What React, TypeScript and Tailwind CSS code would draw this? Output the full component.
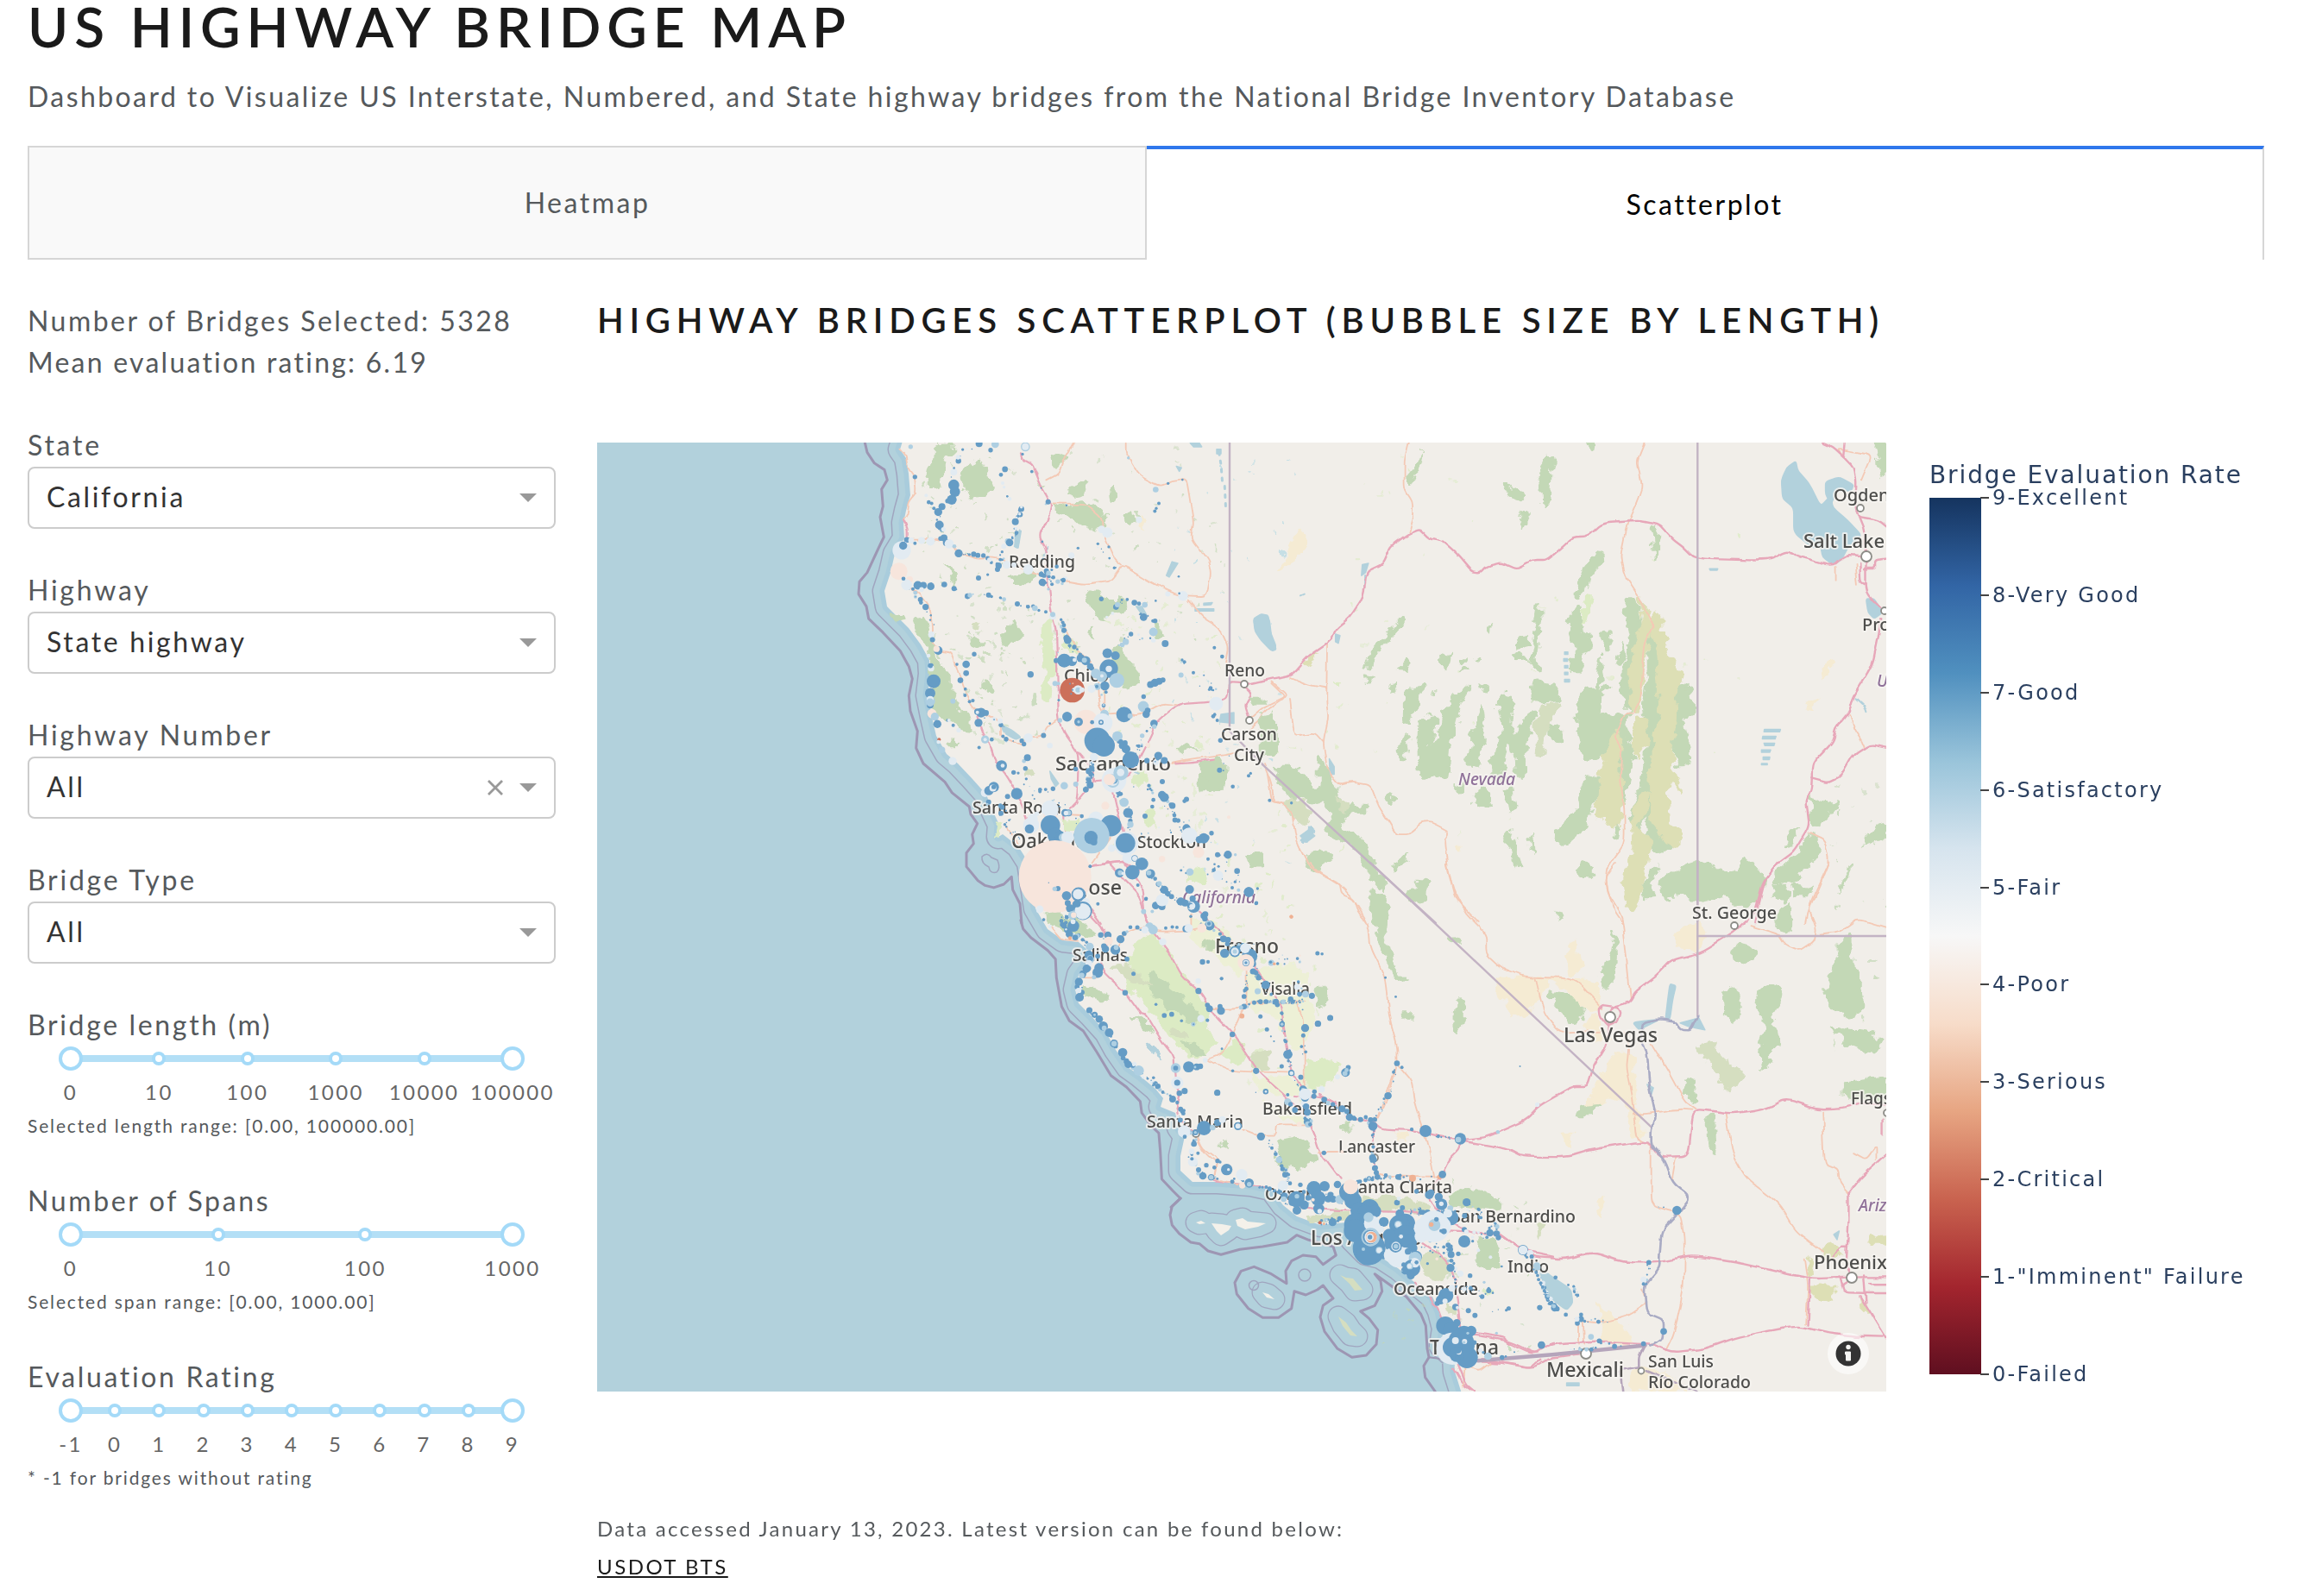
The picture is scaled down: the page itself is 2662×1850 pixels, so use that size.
import React, { createContext, useContext } from "react";

type Sheet = { ox: number; oy: number; sx: number; sy: number };

const NORTH: Sheet = { ox: 1000, oy: 510, sx: 3, sy: 2.8 };
const CENTRAL: Sheet = { ox: 1000, oy: 900, sx: 2.8, sy: 3 };
const SOUTH: Sheet = { ox: 1300, oy: 1240, sx: 3, sy: 3 };
const NEVADA: Sheet = { ox: 1440, oy: 510, sx: 2.09, sy: 2.8 };
const DESERT: Sheet = { ox: 1440, oy: 1000, sx: 2.09, sy: 2.529 };

const COLORS: Record<string, string> = {
  b: "#659cc5",
  l: "#aecfe2",
  w: "#e2ebf2",
  p: "#f7e5dc",
  r: "#cc705a",
  o: "#efb193",
};

const GREEN = "#c3d8b6";
const LIME = "#dcebc4";
const OLIVE = "#dddfb5";
const SAGE = "#d5dec0";
const SAND = "#f5ebd3";
const LAND = "#f1eee9";
const WATER = "#b2d1dc";
const PINK = "#e7a7b9";
const PEACH = "#f4c9b5";
const BORDER = "#c3b3c4";

const SheetContext = createContext<Sheet>(NORTH);

function Layer({ sheet, children }: { sheet: Sheet; children: React.ReactNode }) {
  return <SheetContext.Provider value={sheet}>{children}</SheetContext.Provider>;
}

type Point = [number, number];

function project(sheet: Sheet, points: string): Point[] {
  return points
    .trim()
    .split(/\s+/)
    .map((p) => {
      const [u, v] = p.split(",").map(Number);
      return [sheet.ox + u / sheet.sx, sheet.oy + v / sheet.sy];
    });
}

const mid = (a: Point, b: Point): Point => [(a[0] + b[0]) / 2, (a[1] + b[1]) / 2];
const fmt = (p: Point) => `${p[0].toFixed(1)} ${p[1].toFixed(1)}`;

/* Rounded outline that passes through the middle of every edge. */
function closedPath(pts: Point[]) {
  if (pts.length < 5) return `M${pts.map(fmt).join("L")}Z`;
  const n = pts.length;
  let d = `M${fmt(mid(pts[n - 1], pts[0]))}`;
  pts.forEach((p, i) => {
    const next = pts[(i + 1) % n];
    const prev = pts[(i + n - 1) % n];
    const a = mid(mid(prev, p), p);
    const b = mid(p, mid(p, next));
    d += `L${fmt(a)}Q${fmt(p)} ${fmt(b)}`;
  });
  return `${d}Z`;
}

function openPath(pts: Point[]) {
  if (pts.length < 3) return `M${pts.map(fmt).join("L")}`;
  let d = `M${fmt(pts[0])}`;
  for (let i = 1; i < pts.length - 1; i++) {
    const a = mid(mid(pts[i - 1], pts[i]), pts[i]);
    const b = mid(pts[i], mid(pts[i], pts[i + 1]));
    d += `L${fmt(a)}Q${fmt(pts[i])} ${fmt(b)}`;
  }
  return `${d}L${fmt(pts[pts.length - 1])}`;
}

function Areas({ fill, list, crisp }: { fill: string; list: string[]; crisp?: boolean }) {
  const sheet = useContext(SheetContext);
  return (
    <g fill={fill} stroke={fill} strokeWidth={1.5} strokeLinejoin="round" filter={crisp ? undefined : "url(#ragged)"}>
      {list.map((p, i) => (
        <path key={i} d={closedPath(project(sheet, p))} />
      ))}
    </g>
  );
}

function Lines({ stroke, width, list, straight }: { stroke: string; width: number; list: string[]; straight?: boolean }) {
  const sheet = useContext(SheetContext);
  return (
    <g fill="none" stroke={stroke} strokeWidth={width} strokeLinejoin="round" strokeLinecap="round" filter={straight ? undefined : "url(#winding)"}>
      {list.map((p, i) => (
        <path key={i} d={straight ? `M${project(sheet, p).map(fmt).join("L")}` : openPath(project(sheet, p))} />
      ))}
    </g>
  );
}

function makeRandom(seed: number) {
  let a = seed;
  return () => {
    a = (a + 0x6d2b79f5) | 0;
    let t = Math.imul(a ^ (a >>> 15), 1 | a);
    t = (t + Math.imul(t ^ (t >>> 7), 61 | t)) ^ t;
    return ((t ^ (t >>> 14)) >>> 0) / 4294967296;
  };
}

function Bubbles({ sheet, data }: { sheet: Sheet; data: string }) {
  return (
    <>
      {data
        .trim()
        .split(/\s+/)
        .map((s, i) => {
          const [u, v, r, c] = s.split(",");
          return <circle key={i} cx={sheet.ox + +u / sheet.sx} cy={sheet.oy + +v / sheet.sy} r={+r / sheet.sx} fill={COLORS[c]} />;
        })}
    </>
  );
}

/* Small bridges strung along a highway. */
function Route({ sheet, points, count, spread = 4, max = 3, seed }: { sheet: Sheet; points: string; count: number; spread?: number; max?: number; seed: number }) {
  const pts = project(sheet, points);
  const rnd = makeRandom(seed);
  const lens = pts.slice(1).map((p, i) => Math.hypot(p[0] - pts[i][0], p[1] - pts[i][1]));
  const total = lens.reduce((a, b) => a + b, 0);
  const out: React.ReactNode[] = [];
  for (let k = 0; k < count; k++) {
    let d = rnd() * total;
    let i = 0;
    while (i < lens.length - 1 && d > lens[i]) d -= lens[i++];
    const t = d / lens[i];
    const x = pts[i][0] + (pts[i + 1][0] - pts[i][0]) * t + (rnd() - 0.5) * spread;
    const y = pts[i][1] + (pts[i + 1][1] - pts[i][1]) * t + (rnd() - 0.5) * spread;
    const r = 0.7 + Math.pow(rnd(), 2.4) * max;
    const q = rnd();
    out.push(<circle key={k} cx={x} cy={y} r={r} fill={q < 0.72 ? COLORS.b : q < 0.86 ? COLORS.l : q < 0.97 ? COLORS.w : COLORS.p} />);
  }
  return <>{out}</>;
}

const COAST =
  "1048,505 1043,521 1050,531 1053,549 1055,574 1050,592 1047,606 1048,624 1037,642 1032,664 1025,685 1028,703 1040,715 1053,728 1067,747 1077,765 1078,781 1075,806 1080,831 1085,853 1097,874 1110,885 1127,903 1143,921 1150,939 1158,956 1157,970 1162,967 1180,981 1192,1000 1200,1053 1214,1077 1232,1090 1250,1092 1259,1100 1262,1113 1250,1130 1246,1147 1250,1163 1264,1177 1282,1197 1293,1217 1307,1237 1321,1247 1339,1262 1348,1273 1345,1283 1362,1290 1366,1307 1373,1317 1368,1340 1368,1357 1382,1370 1411,1370 1450,1373 1473,1378 1487,1397 1503,1410 1530,1420 1560,1417 1567,1437 1583,1453 1600,1457 1620,1470 1640,1487 1660,1503 1668,1520 1673,1540 1670,1560 1685,1573 1686,1590 1697,1625";

const ISLANDS = [
  "1386,1417 1392,1415 1397,1418 1390,1419",
  "1404,1418 1416,1419 1427,1421 1424,1426 1415,1432 1410,1427",
  "1432,1414 1440,1412 1446,1416 1467,1418 1458,1422 1443,1425 1434,1421",
  "1463,1498 1470,1500 1477,1506 1468,1504",
];
const GREEN_ISLANDS = ["1553,1478 1560,1481 1568,1482 1579,1495 1570,1496 1564,1488", "1551,1526 1560,1533 1566,1542 1573,1549 1565,1548 1556,1537"];

const SMALL_TOWNS = [
  [1442, 793, 4], [1448, 835, 4], [1866, 1179, 6], [2010, 1073, 4], [2146, 1481, 6], [1838, 1569, 6],
  [1902, 1589, 3.5], [2163, 645, 6], [2156, 589, 4], [1386, 1314, 4], [1593, 1342, 4], [2187, 1290, 4], [2184, 708, 4],
];

type Label = [string, number, number, number, number, boolean?];
/* text, x, baseline, font size, width (0 keeps the natural width), region name */
const LABELS: Label[] = [
  ["Redding", 1169, 658, 20, 77],
  ["Chico", 1233, 790, 20, 52],
  ["Reno", 1419, 784, 20, 47],
  ["Carson", 1415, 858, 20, 65],
  ["City", 1430, 882, 20, 35],
  ["Sacramento", 1223, 893, 22, 134],
  ["Santa Rosa", 1127, 943, 20, 103],
  ["Oakland", 1172, 983, 23, 88],
  ["Stockton", 1318, 983, 19, 80],
  ["San Jose", 1208, 1037, 23, 92],
  ["California", 1370, 1047, 19, 85, true],
  ["Salinas", 1243, 1114, 19, 64],
  ["Fresno", 1408, 1105, 23, 74],
  ["Visalia", 1461, 1153, 19, 57],
  ["Santa Maria", 1329, 1307, 19, 112],
  ["Bakersfield", 1463, 1292, 19, 104],
  ["Lancaster", 1551, 1336, 19, 89],
  ["Oxnard", 1466, 1391, 19, 66],
  ["Santa Clarita", 1563, 1383, 19, 120],
  ["Los Angeles", 1519, 1443, 23, 128],
  ["San Bernardino", 1682, 1417, 19, 144],
  ["Indio", 1747, 1475, 19, 48],
  ["Oceanside", 1615, 1501, 19, 98],
  ["Tijuana", 1657, 1570, 23, 80],
  ["Mexicali", 1792, 1596, 23, 90],
  ["San Luis", 1910, 1585, 19, 76],
  ["Río Colorado", 1910, 1609, 19, 119],
  ["Las Vegas", 1812, 1208, 23, 109],
  ["St. George", 1961, 1065, 19, 98],
  ["Salt Lake City", 2090, 635, 22, 0],
  ["Ogden", 2125, 581, 20, 0],
  ["Provo", 2158, 731, 20, 0],
  ["Utah", 2175, 796, 19, 0, true],
  ["Nevada", 1690, 910, 19, 66, true],
  ["Flagstaff", 2145, 1280, 19, 0],
  ["Arizona", 2154, 1404, 19, 0, true],
  ["Phoenix", 2102, 1471, 22, 0],
];

const TERRITORIAL_NORTH =
  "7,8 15,40 40,75 75,97 85,130 65,160 70,215 60,250 73,315 55,350 15,430 -12,460 -15,500 12,540 20,580 70,625 130,685 160,735 172,775 160,830 165,880 190,945 185,1000 210,1050 285,1110 310,1145 370,1190 375,1215 398,1245 380,1280 385,1310 360,1340 360,1385 400,1430 425,1446 455,1453 490,1442 517,1418 521,1460 546,1505 552,1568";
const TERRITORIAL_CENTRAL =
  "512,500 520,530 545,560 600,605 625,635 628,700 645,800 670,850 715,885 760,960 805,1040 855,1080 900,1130 905,1170 935,1215 960,1240 965,1300 968,1360 970,1400 1005,1440 1030,1467 1000,1498";
const TERRITORIAL_SOUTH =
  "205,447 175,475 168,505 175,540 200,570 240,600 270,605 300,630 345,643 410,625 490,615 575,600 608,575 650,592 735,615 745,645 700,677 675,650 630,645 590,665 570,700 573,743 520,710 460,685 415,700 393,740 400,780 440,830 490,862 545,862 590,830 600,770 640,783 680,765 700,750 735,795 700,820 690,860 705,910 750,970 800,1000 850,993 885,955 890,905 860,865 830,840 880,820 905,770 900,735 880,710 990,790 1040,850 1057,890 1062,970 1068,1000 1050,1030 1055,1070 1090,1119";

const NORTH_BUBBLES = `
404,12,12,b 444,33,8,b 460,14,13,l 565,22,16,l 565,22,12,w 347,31,5,b 555,46,5,b 166,22,8,l 331,56,8,w 494,95,10,b 480,113,7,b
181,120,8,b 316,104,12,w 317,91,4,b 316,146,19,b 320,168,18,b 309,194,17,b 275,216,12,b 262,234,14,b 229,202,7,b 239,206,6,b 247,222,6,b
266,276,15,b 280,290,8,w 282,318,12,b 270,320,8,b 290,333,12,b 300,337,16,w 318,345,7,l 333,368,14,b 370,372,5,b 419,375,8,b 440,389,8,w
472,408,11,b 468,420,9,b 500,405,14,w 575,420,18,w 525,405,9,w 153,324,10,b 168,326,10,w 181,335,6,b 204,326,12,w 235,329,15,w
135,358,32,w 140,343,14,b 125,426,30,p 163,453,11,p 152,470,19,w 141,450,7,b 191,472,15,b 210,472,12,b 236,475,13,b 174,484,6,b 204,485,8,w
283,469,10,b 317,482,9,b 200,518,9,b 202,528,7,b 218,542,11,b 364,507,10,b 372,504,8,l 402,448,9,b 434,437,5,b 437,503,9,b 478,512,5,b 491,517,7,l
537,532,9,b 574,541,7,b 592,540,7,b 598,546,10,l 636,558,6,b 660,572,12,w 660,566,9,l 689,583,5,b 695,592,6,b 699,601,7,b 699,618,9,b 708,643,11,b 712,650,13,b 735,672,8,b
530,265,12,b 534,301,7,b 510,333,13,b 551,224,10,b 547,242,9,b 551,218,5,w 545,240,5,w 490,345,9,w 484,363,5,b 644,201,9,b 708,212,4,b
486,140,6,w 491,153,5,w 502,183,4,b 510,191,7,w 220,180,6,w
624,462,13,b 620,436,9,b 638,425,9,b 630,440,8,b 662,446,7,b 645,432,8,l 697,455,8,b 674,411,7,b 645,484,5,l 725,375,11,w
748,351,5,b 817,337,5,b 850,300,18,w 830,290,13,w 855,347,5,b 874,415,5,b 923,58,5,l 1018,161,10,l 1061,141,5,b 1111,129,4,b 1029,206,6,b 1020,222,5,b 1015,231,6,b 960,259,11,w
1113,506,17,w 1060,500,9,w 1100,498,4,b 1098,443,4,b 1018,522,4,b 980,535,10,l 944,528,10,b 960,531,7,b 976,575,13,b 1016,587,8,b 880,542,10,b 885,535,9,l 829,516,8,b 848,575,5,w 868,563,6,w
932,630,8,b 914,655,11,l 902,665,8,l 1010,623,15,l 1010,650,8,w 1051,661,12,b 1222,674,6,b 1249,703,7,b 1106,763,9,l 1149,755,6,b 1118,720,6,b 1110,714,5,b 1209,805,7,b
238,632,11,w 242,648,9,b 262,683,15,b 256,678,11,p 236,734,10,b 237,741,11,w 235,733,8,b 246,783,24,b 234,822,18,b 234,848,17,l 234,842,12,w 234,860,12,b 234,852,14,l 228,700,7,w
240,888,16,p 250,898,14,l 259,922,14,b 265,972,6,r 263,980,7,w 275,1006,11,l 312,1042,14,w 294,910,5,b 299,910,6,w 314,926,6,b 333,942,8,w 313,848,9,l 355,829,6,b 339,780,10,b 359,757,10,b 359,728,13,b 387,695,8,b
398,882,11,b 411,885,17,b 398,884,6,w 428,886,10,b 402,918,14,b 425,972,14,l 425,972,6,w 448,972,7,b 404,998,6,b 480,925,8,b 477,912,9,w 487,962,6,b 498,971,8,b 560,987,8,b 575,967,16,w 628,959,9,b 630,945,5,w 650,992,10,w 650,920,4,b 685,910,8,l 583,761,11,b
482,1057,19,b 486,1057,7,w 524,1079,8,b 540,1081,5,b 565,1066,8,b 560,1042,7,l 572,1031,12,b 568,1100,5,b 560,1118,3,b
425,1145,15,w 438,1138,16,b 455,1126,18,b 452,1130,12,w 455,1126,8,b 437,1175,9,b 432,1183,5,l 535,1148,20,b 503,1157,9,b 478,1186,7,b 484,1192,9,b 480,1212,9,b 661,1132,8,b 700,1122,13,l 740,1117,9,l 616,1135,7,b 740,1068,8,b
850,692,17,b 878,700,15,b 700,716,24,b 672,716,9,b 727,718,17,b 736,714,7,w 757,708,14,b 775,716,16,b 770,715,9,l 790,735,11,b 796,741,8,b
855,742,32,b 855,743,11,w 810,758,17,l 830,768,19,l 831,766,6,w 883,780,26,l 841,798,16,b 815,800,12,l 795,808,14,w 813,800,6,b 668,790,9,l 680,790,6,l
728,812,43,r 735,811,8,w 748,811,16,w 748,811,9,l 762,811,9,w 729,811,3,b 724,824,3,b 730,790,3,o 720,791,3,b 837,862,7,b 837,860,4,l
776,915,42,p 710,898,17,b 750,915,15,b 750,915,5,l 835,918,33,w 840,890,15,l 832,916,31,w 797,916,7,b 828,916,9,b 828,916,4,w 908,891,27,b 929,896,9,l 975,865,19,l 985,890,13,b 976,833,8,b 990,878,10,b 1012,920,13,b 1013,930,8,l
1000,794,12,b 1015,788,14,b 1030,783,12,b 1043,779,9,b 1228,856,24,w 1218,897,7,b 1232,910,6,b 1243,975,8,b
815,976,45,b 838,992,38,b 885,962,18,l 897,980,9,b 902,992,12,b 915,1003,15,b 931,1038,29,b 803,1029,14,w 796,1065,9,b 792,1085,8,b 790,1120,12,b 775,1135,10,b 945,1048,12,b
1027,1025,14,b 1048,1040,12,b 971,960,8,l 990,990,8,p 1240,1072,9,b 1286,1125,7,b 1341,1090,6,b 1348,1082,5,b 1414,1170,6,b 1041,1109,9,b 1490,1178,5,b
873,1104,43,w 870,1100,28,w 869,1108,22,l 869,1106,18,w 872,1103,14,b 866,1100,17,l 857,1102,20,p 897,1080,26,l 896,1079,13,w
891,1149,8,b 908,1176,16,l 922,1210,17,b 930,1248,11,l 843,1187,14,p 981,1221,9,b 1010,1168,7,b 1006,1190,7,b 1040,1152,14,b 1048,1160,16,b 1076,1187,11,b 1125,1166,9,b 1118,1172,7,b 1083,1218,7,b 1096,1235,8,b
1125,1260,14,b 1135,1284,28,w 1185,1293,18,b 1170,1297,13,b 1195,1291,10,b 1212,1276,8,b 1167,1338,20,p 1233,1346,9,b 1269,1346,14,b 1295,1346,5,l 1200,1360,6,b 1220,1396,7,b 1301,1399,10,b 1235,1414,18,w 1137,1402,13,l 1040,1360,11,p
650,1198,30,w 652,1215,25,p 652,1200,28,w 652,1250,34,b 585,1250,28,w 579,1262,16,b 590,1230,18,w 668,1283,26,b 685,1285,18,b 695,1290,14,l 712,1290,22,w 742,1282,9,b 715,1210,12,b 703,1210,13,b 715,1210,9,l 706,1211,8,w 761,1221,7,b
605,1213,8,w 810,1230,26,w 862,1252,37,b 795,1284,62,l 793,1290,23,b 803,1305,12,b 915,1310,42,w 913,1308,34,b 865,1325,13,w 920,1357,18,w 945,1358,11,b 945,1358,9,w 970,1376,22,b 937,1403,25,b 892,1405,16,b 895,1405,9,l 905,1407,6,w
668,1417,126,p 790,1384,6,b 615,1523,13,w 1000,1408,16,b 994,1405,9,l 1016,1424,7,b 1030,1440,9,l 1048,1460,14,b 1060,1473,10,b 1073,1482,9,b 1040,1496,22,w 1018,1511,13,b 1040,1515,12,b 1040,1494,21,w
678,1456,9,b 667,1457,8,l 708,1479,16,b 712,1503,10,b 750,1475,25,b 748,1474,18,w 775,1500,14,w 743,1508,15,b 765,1528,32,b 764,1530,28,w 720,1520,14,b 745,1506,12,b 646,1437,2,b
1105,1498,14,b 1120,1503,12,b 1150,1514,22,b 1142,1512,14,w 1137,1511,10,b 1143,1514,8,w 1136,1459,15,b 1342,1467,17,b 1367,1504,6,b 1372,1456,5,b 984,1490,6,b 976,1530,8,l 1006,1530,6,l 817,1506,6,b 956,1445,6,b 1294,1434,5,b 1306,1461,6,l 1284,1453,6,b
1491,1548,5,o 1272,1224,6,p 628,1557,5,b 690,1561,7,b`;

const CENTRAL_BUBBLES = `
572,466,9,w 587,498,5,b 607,522,6,w 644,503,6,b 653,520,9,b 683,520,19,b 682,505,8,w 670,548,12,b 672,562,6,o 689,560,9,b 713,568,6,b 726,577,5,b 680,483,14,l 665,440,9,b 684,482,9,p
736,592,13,l 733,620,14,b 738,636,13,l 738,634,9,b 762,625,8,b 733,650,11,w 726,668,13,b 714,686,11,b 710,692,9,l 701,714,13,b 695,732,8,b 700,745,9,w 703,768,14,b 766,665,15,b 762,682,17,b 750,698,7,l 725,672,8,b
772,551,9,b 795,552,12,b 797,572,14,p 782,590,9,b 787,600,12,b 819,603,16,b 822,595,8,l 836,566,13,b 848,546,8,b 857,540,5,l 857,635,8,b 878,686,7,b 851,752,9,b
735,813,10,b 752,829,10,b 752,829,4,l 767,844,12,b 780,868,15,b 783,875,8,l 799,891,14,b 815,929,13,b 815,929,9,l 843,960,15,b 855,990,9,b 861,1001,12,b 895,1023,17,l 924,1051,4,b 943,1048,5,b 957,1078,9,b 964,1090,6,l 942,1074,4,b
1005,1122,11,b 1027,1102,9,b 1044,1094,10,b 1020,1065,20,w 1020,1065,10,b 1020,1134,6,b 1031,1157,8,b 1030,1195,8,b 1015,1014,16,l 1015,1014,8,b 1057,1010,18,b 1083,1010,11,b 1095,1008,9,b 1078,1011,4,l 1111,987,8,w
1150,1100,10,b 951,793,5,b 978,831,8,b 1002,827,8,b 1034,850,5,b 1072,862,7,l 1073,862,3,b 1097,842,12,w 1118,848,6,b 1165,947,4,b 1118,795,8,b 1125,808,11,b 1162,815,13,b 1159,800,8,b 1089,746,10,b 1164,703,6,b 1088,712,9,w
1199,897,9,b 1200,1024,5,b 1276,1024,10,b 1230,833,8,o 1290,835,7,b 1311,880,7,b 1324,904,3,b 1334,921,3,b 1359,823,6,b 1360,862,9,b 1360,862,5,l 1372,922,6,b 1379,967,15,b 1359,1008,7,b 1390,1031,10,b 1390,1031,7,w 1421,1046,8,b
1435,875,13,b 1429,901,7,b 1477,860,10,b 1517,840,9,b 1457,763,10,b 1436,757,11,l 1417,757,8,b 1388,775,9,b 1340,784,10,b 1364,784,8,l 1308,783,8,b 1290,783,8,b 1270,787,7,b 1237,800,9,b 1227,803,7,l 1237,765,8,b 1413,714,5,b 1409,732,10,w
1307,725,14,b 1281,747,10,l 1284,700,9,b 1266,678,10,b 1243,598,17,w 1255,625,25,b 1240,598,16,w 1243,647,27,p 1243,648,11,b 1243,648,9,w 1243,648,5,b 1207,609,18,b 1207,609,13,w 1207,609,7,l 1174,615,15,b 1183,582,8,b 1170,565,11,b 1159,548,6,b
1125,518,16,b 1123,512,10,l 1123,512,6,b 1100,527,15,p 1057,528,14,w 1048,530,11,b 1055,528,12,w 930,523,14,l 942,533,15,l 915,533,12,w 973,575,12,w 911,470,8,l 919,425,6,b 1070,425,10,b 1110,495,9,b 1064,487,5,b
1102,645,9,b 1120,645,6,b 1325,648,10,l 1323,646,5,b 1335,652,5,o 1346,651,5,b 1390,488,6,o 1475,615,7,b 1490,617,5,b 1277,440,6,b 1307,1096,9,b 1307,1096,4,w 1275,1099,2,b`;

const SOUTH_BUBBLES = `
590,12,10,b 590,12,7,w 622,25,8,b 467,4,9,b 778,10,15,b 777,12,8,l 750,25,9,w 695,68,11,w 630,68,13,b 637,88,22,w 630,70,7,l 637,97,14,b 637,85,20,w 670,76,8,b 668,92,9,b 704,104,10,b 717,116,8,l 733,119,6,b 577,112,12,l 587,120,8,b 602,140,10,b 641,128,11,b 645,148,12,b 766,136,12,b 577,87,6,b
501,76,8,b 501,76,4,w 792,165,13,b 807,169,8,b 830,173,9,b 865,174,9,b 880,173,8,b 873,196,16,b 925,91,12,b 1008,207,6,b 1056,213,21,b 1177,240,20,b 1170,243,10,l 1307,216,6,l 1445,121,8,w 648,190,11,l 655,190,7,b 617,190,9,p
332,80,10,b 286,203,25,b 316,201,10,l 333,184,12,b 350,173,12,w 404,196,14,b 404,196,9,w 484,232,14,b 217,215,22,w 219,233,7,b 256,218,10,b 256,218,5,l 251,258,10,b 243,284,10,w 265,290,6,b 247,320,17,w 244,310,6,b 267,348,9,b 282,369,13,b 294,332,8,b 311,374,11,b 311,374,8,l 322,340,7,b 333,317,8,b 342,321,5,b 365,347,20,b 371,347,5,w 417,365,20,w 419,402,11,p 443,394,16,b 443,398,8,l 514,414,8,b
703,289,8,b 766,285,6,p 522,272,6,b 535,293,7,b 547,313,11,l 559,345,8,b 568,365,10,b 560,403,18,w 585,395,7,b 621,400,8,b 565,440,13,b 563,450,10,l 633,425,7,b
668,412,25,b 705,405,18,b 683,447,26,b 607,450,28,b 609,440,8,l 609,489,15,b 634,470,16,b 685,483,19,b 688,492,8,w 665,452,6,p 750,399,13,b 718,449,12,b 735,450,12,b 758,451,16,l 790,425,34,b 804,455,30,b 825,490,30,b 796,407,26,p
862,482,32,b 880,492,22,b 845,495,25,b 815,540,42,b 812,560,40,b 870,535,28,w 858,513,17,l 860,622,57,b 855,640,40,b 911,529,17,b 900,555,12,w 733,530,14,b 757,517,8,b 689,532,6,r 703,536,4,o
865,582,32,l 863,582,25,b 866,582,22,w 868,582,19,o 863,582,13,w 863,582,8,b 895,628,12,l 895,628,9,w 840,624,6,l 910,645,14,b
967,500,15,b 985,535,35,b 965,540,35,b 961,538,13,l 961,538,9,w 955,600,42,b 985,580,40,b 930,575,22,b 971,580,7,w 1000,600,26,b 1010,620,18,b
960,650,38,w 935,645,24,w 985,640,22,w 952,614,22,b 953,614,16,w 953,614,12,b 953,614,8,l 1000,655,20,w 995,632,11,b 1023,650,21,b 1015,660,18,w 1020,655,22,l 1018,672,18,w 1008,690,30,b 1020,672,16,w 1025,670,7,b 1005,715,14,b 1002,683,11,l 1000,683,8,w 980,678,8,b 965,672,8,w
872,306,12,b 877,313,10,b 880,342,10,b 885,358,9,b 889,373,10,b 918,367,7,b 932,373,6,l 961,373,10,b 1011,377,12,o 1104,373,8,o 1115,364,13,b 829,388,6,b 860,378,8,b 860,378,5,l 1069,435,15,b 1075,428,12,b 1025,423,8,b 1102,442,14,b 1112,468,20,b 1111,466,8,w 957,462,10,b 963,448,7,w 1047,496,9,b 1062,496,9,b
1145,515,26,b 1142,482,10,l 1130,500,12,w 1085,545,55,w 1050,550,34,w 1040,580,22,w 1110,545,35,w 1087,540,21,l 1076,538,8,o 1094,520,8,b 1120,562,10,b 1110,560,6,b 1135,500,14,w 1155,520,14,b 1066,578,14,w
1199,461,14,b 1240,485,6,b 1192,508,9,b 1222,483,4,p 1191,597,21,b 1191,556,9,b 1198,563,8,w 1170,640,8,b 1145,643,12,b 1143,625,9,b 1135,610,9,b 1143,689,14,b 1146,664,7,b 1177,709,11,w 1211,716,8,b 1063,674,5,b 1225,565,6,w 1240,565,5,w 1280,567,13,b 1303,570,11,b 1309,585,8,b 1305,545,8,l 1220,596,5,b
1395,627,18,b 1395,627,16,w 1420,637,11,w 1426,650,7,b 1443,682,12,l 1441,705,6,b 1321,684,4,b 1282,652,6,w 1240,628,6,w
1127,785,26,b 1108,800,16,b 1097,812,9,b 1124,805,9,w 1148,760,12,w 1160,825,11,b 1167,827,6,w 1205,838,9,b 1228,854,9,b 1191,762,8,w 1276,768,9,b 1253,789,8,b 1290,776,4,b 1213,760,7,b 1346,830,7,b 1337,836,5,b 1453,827,9,b 1309,834,2,b 1260,739,5,l 1289,841,2,b
1125,890,32,b 1165,880,13,b 1145,905,28,b 1215,908,18,b 1190,920,30,b 1180,950,45,b 1150,970,56,w 1175,940,38,b 1200,1000,38,b 1197,960,30,b 1150,965,34,b 1165,990,26,b 1160,942,12,w 1172,982,9,w 1168,975,12,b 1192,945,9,w 1190,948,5,l 1168,1004,9,b 1203,916,5,l
1246,976,8,w 1273,996,13,l 1257,983,5,b 1322,1000,8,b 1335,997,4,b 1303,916,5,l 1365,982,3,b 1459,957,12,b`;

const DESERT_BUBBLES = `
374,588,7,b 386,600,4,b 353,683,8,b 371,393,3,b 346,337,3,b 672,597,2,b 15,86,12,b 33,119,4,b 118,158,4,o 251,612,8,b 256,600,6,b 248,618,6,l 252,608,5,l 182,472,7,b 212,455,7,b
410,782,4,b 619,790,4,l 714,710,5,w 1052,1019,11,b 984,1172,6,b 971,1222,7,w 971,1235,4,b 1020,1374,8,b 971,1410,6,b 901,1418,6,b 864,1402,6,b 844,1390,7,l 845,1427,5,b 833,1427,5,l 817,1427,4,l 724,1414,9,b 629,1451,5,b 595,1447,8,l
820,1338,7,b 820,1325,5,b 811,1350,6,b 810,1338,6,w 862,1346,5,b 783,1325,5,b 756,1305,9,b 762,1308,6,b 738,1272,6,b 740,1270,4,l 720,1304,6,b 758,1216,5,b 754,1300,5,l 731,1255,4,b 644,1307,5,b 727,1244,4,b 722,1232,4,b 717,1222,4,b
714,1186,8,l 789,1238,3,b 804,1250,4,l 812,1268,3,b 803,1256,3,b 700,1155,5,b 1020,1010,2,b 1008,1010,2,l`;

const ROUTES: [Sheet, string, number, number, number][] = [
  [NORTH, "404,12 347,31 331,56 316,104 316,146 309,194 262,234 266,276 282,318 333,368 419,375 472,408", 26, 6, 2.5],
  [NORTH, "191,472 283,469 317,482 372,504 437,503 537,532 598,546 660,566", 16, 5, 2],
  [NORTH, "551,224 530,265 534,301 510,333 472,400", 18, 5, 3],
  [NORTH, "152,470 200,518 240,580 238,640 262,683 300,690 340,780 355,829 398,882 480,925 498,971 560,987", 30, 6, 2],
  [NORTH, "565,60 644,201 620,300 650,480 672,620 678,780 685,910", 12, 6, 1.3],
  [NORTH, "624,462 697,455 620,436 660,420", 22, 8, 2.2],
  [NORTH, "689,583 712,650 757,708 796,741 837,800 837,862", 22, 6, 2.4],
  [NORTH, "829,516 944,528 976,575 1016,587", 12, 6, 2],
  [NORTH, "1015,650 932,630 900,665 878,700", 8, 6, 1.6],
  [NORTH, "817,337 874,415", 5, 4, 1],
  [NORTH, "1098,690 1118,720 1149,755 1209,805 1218,897 1243,975 1286,1125", 16, 14, 1.2],
  [NORTH, "797,1040 792,1085 775,1135", 22, 5, 3],
  [NORTH, "885,962 902,992 931,1038 1048,1040", 24, 8, 3],
  [NORTH, "873,1104 891,1149 922,1210 930,1248 915,1310", 20, 6, 2.6],
  [NORTH, "931,1038 1012,920 985,890 975,865", 14, 6, 2],
  [NORTH, "940,1120 1000,1130 1048,1160 1096,1235 1170,1297", 26, 8, 2.4],
  [NORTH, "1170,1297 1269,1346 1233,1380 1301,1399 1284,1453 1342,1467", 18, 24, 1.2],
  [NORTH, "930,1300 1010,1270 1090,1260 1125,1260", 14, 10, 1.2],
  [NORTH, "970,1376 1030,1440 1073,1482 1150,1514 1230,1568", 34, 7, 3],
  [NORTH, "484,1192 520,1280 545,1310", 14, 10, 1.4],
  [NORTH, "560,1118 650,1160 700,1210 761,1221", 20, 20, 1.4],
  [NORTH, "1090,1420 1137,1402 1170,1380 1220,1396", 8, 30, 1.2],
  [NORTH, "708,1479 765,1528 720,1540 690,1561", 26, 14, 2.4],
  [CENTRAL, "644,503 690,560 736,592 738,640 701,714 703,768", 44, 7, 3],
  [CENTRAL, "735,813 799,891 855,990 895,1023 957,1078 1005,1122", 44, 5, 2.2],
  [CENTRAL, "772,551 819,603 860,535 930,523 1057,528 1123,512", 24, 6, 2],
  [CENTRAL, "1123,512 1174,565 1243,620 1307,725 1340,784", 40, 8, 3],
  [CENTRAL, "1237,800 1270,787 1340,784 1425,784", 34, 4, 2],
  [CENTRAL, "1360,800 1372,922 1390,1031 1430,1090", 24, 5, 1.6],
  [CENTRAL, "1413,714 1417,757 1430,870 1429,973", 14, 6, 1.4],
  [CENTRAL, "1237,760 1245,690", 10, 4, 2],
  [CENTRAL, "1030,1157 1033,1200 1078,1240", 12, 8, 2],
  [CENTRAL, "1118,795 1125,820", 8, 5, 2],
  [CENTRAL, "1320,650 1400,630 1480,615", 10, 14, 1.2],
  [CENTRAL, "1180,600 1260,600 1240,650", 20, 16, 2],
  [SOUTH, "256,218 251,258 240,310 282,369 311,374", 26, 6, 2],
  [SOUTH, "311,374 443,394 514,414 560,430", 26, 5, 2],
  [SOUTH, "510,250 535,293 570,350 575,385 555,440", 30, 5, 2],
  [SOUTH, "565,450 607,450 683,447 760,451", 40, 12, 3.4],
  [SOUTH, "637,60 641,150 650,190", 26, 6, 3],
  [SOUTH, "733,119 766,136 792,165 865,174 873,196", 28, 5, 2.4],
  [SOUTH, "872,180 905,130 925,91 950,10", 14, 4, 1.6],
  [SOUTH, "873,196 872,306 889,373", 26, 3, 2],
  [SOUTH, "889,373 961,373 1011,377 1104,373", 16, 5, 1.6],
  [SOUTH, "750,399 829,388 870,378", 16, 5, 2],
  [SOUTH, "1060,225 1125,236 1177,240", 14, 3, 1.4],
  [SOUTH, "957,490 1062,496 1112,468 1145,515", 34, 10, 3],
  [SOUTH, "985,535 960,600 1010,690", 60, 22, 4],
  [SOUTH, "1135,610 1145,660 1160,750 1127,785 1160,825", 34, 6, 2.4],
  [SOUTH, "1145,515 1240,485 1225,565 1303,570", 22, 16, 1.6],
  [SOUTH, "1060,600 1120,640", 14, 18, 1.4],
  [SOUTH, "1300,530 1309,590", 14, 4, 2],
  [SOUTH, "1395,627 1441,700 1480,785 1495,830", 34, 4, 2],
  [SOUTH, "1170,760 1230,770 1290,776", 16, 12, 1.4],
  [SOUTH, "660,515 690,532 757,517", 14, 7, 1.8],
  [SOUTH, "1145,900 1200,950 1180,1000", 40, 24, 3],
  [DESERT, "800,1330 820,1340 880,1346", 12, 5, 1.6],
  [DESERT, "785,1425 850,1425 865,1402 930,1415", 14, 5, 1.4],
  [DESERT, "725,1235 731,1260 760,1308", 22, 4, 2],
  [DESERT, "795,1238 815,1275", 8, 4, 1],
  [DESERT, "984,1172 984,1200 971,1240", 10, 4, 1.4],
  [DESERT, "374,590 353,683 318,750", 14, 4, 1.4],
];

function seededBlobs(seed: number, count: number, box: [number, number, number, number], fill: string, max: number) {
  const rnd = makeRandom(seed);
  return Array.from({ length: count }, (_, i) => {
    const x = box[0] + rnd() * box[2];
    const y = box[1] + rnd() * box[3];
    return <ellipse key={`${seed}-${i}`} cx={x} cy={y} rx={0.8 + rnd() * max} ry={0.8 + rnd() * max} fill={fill} opacity={0.45 + rnd() * 0.4} />;
  });
}

function BridgeMap() {
  return (
    <svg className="block h-[1100px] w-[1494px] shrink-0" viewBox="692 513 1494 1100">
      <defs>
        <filter id="ragged" filterUnits="userSpaceOnUse" x={692} y={513} width={1494} height={1100}>
          <feTurbulence type="fractalNoise" baseFrequency={0.07} numOctaves={3} seed={4} result="n" />
          <feDisplacementMap in="SourceGraphic" in2="n" scale={17} xChannelSelector="R" yChannelSelector="G" />
        </filter>
        <filter id="winding" filterUnits="userSpaceOnUse" x={692} y={513} width={1494} height={1100}>
          <feTurbulence type="fractalNoise" baseFrequency={0.05} numOctaves={2} seed={9} result="n" />
          <feDisplacementMap in="SourceGraphic" in2="n" scale={7} xChannelSelector="R" yChannelSelector="G" />
        </filter>
      </defs>
      <rect x={692} y={513} width={1494} height={1100} fill={WATER} />

      {/* inshore boundary, a constant distance from the shore */}
      <g fill="none" strokeLinejoin="round" strokeLinecap="round">
        <polyline points={COAST} stroke="#a0a5bf" strokeWidth={29} />
        {[...ISLANDS, ...GREEN_ISLANDS].map((p, i) => (
          <polygon key={i} points={p} stroke="#a0a5bf" strokeWidth={25} />
        ))}
        <polyline points={COAST} stroke={WATER} strokeWidth={26} />
        {[...ISLANDS, ...GREEN_ISLANDS].map((p, i) => (
          <polygon key={i} points={p} fill={WATER} stroke={WATER} strokeWidth={22.5} />
        ))}
        <polyline points={COAST} stroke="#a5cbdb" strokeWidth={11} opacity={0.7} />
        <circle cx={1512} cy={1478} r={7} stroke="#a0a5bf" strokeWidth={1.5} />
        <circle cx={1453} cy={1490} r={5.5} stroke="#a0a5bf" strokeWidth={1.5} />
        <path d="M1138 993q6-6 11 1l7 3q4 10-1 14q-8 2-9-6q-9-4-8-12z" stroke="#a0a5bf" strokeWidth={1.5} />
      </g>
      <polygon points={`${COAST} 2200,1625 2200,505`} fill={LAND} />
      {ISLANDS.map((p, i) => (
        <polygon key={i} points={p} fill="#f4f1ea" />
      ))}
      {GREEN_ISLANDS.map((p, i) => (
        <polygon key={i} points={p} fill={SAGE} />
      ))}

      <Layer sheet={NORTH}>
        <Lines straight stroke="#9d96b3" width={3} list={[TERRITORIAL_NORTH]} />
      </Layer>
      <Layer sheet={CENTRAL}>
        <Lines straight stroke="#9d96b3" width={3} list={[TERRITORIAL_CENTRAL]} />
      </Layer>
      <Layer sheet={SOUTH}>
        <Lines straight stroke="#9d96b3" width={3} list={[TERRITORIAL_SOUTH]} />
      </Layer>

      <g filter="url(#ragged)">
        {seededBlobs(3, 60, [1070, 520, 110, 250], GREEN, 2)}
        {seededBlobs(5, 60, [1180, 520, 240, 260], GREEN, 2)}
        {seededBlobs(6, 45, [1120, 700, 80, 160], GREEN, 3)}
        {seededBlobs(8, 50, [1360, 520, 140, 500], "#b9dbe4", 1.8)}
        {seededBlobs(9, 50, [1380, 860, 130, 260], LIME, 3)}
        {seededBlobs(11, 70, [1280, 700, 140, 280], LIME, 2.4)}
        {seededBlobs(12, 40, [1540, 520, 500, 500], LIME, 1.6)}
        {seededBlobs(13, 26, [2120, 900, 66, 400], GREEN, 3)}
        {seededBlobs(15, 40, [1440, 1080, 90, 200], LIME, 3)}
        {seededBlobs(16, 40, [1600, 1370, 180, 200], GREEN, 2)}
      </g>

      <Layer sheet={NORTH}>
        <Areas
          fill={GREEN}
          list={[
            "255,10 310,10 315,40 290,60 278,120 268,150 240,160 228,140 240,80 252,60",
            "350,90 375,95 385,65 400,62 410,80 440,90 445,135 455,160 435,178 400,178 385,185 370,170 345,160 340,140",
            "655,60 690,40 708,55 700,75 670,82",
            "665,215 700,205 735,215 750,200 800,210 850,250 840,275 800,290 760,270 700,245 670,235",
            "700,170 730,160 770,130 775,165 740,185",
            "860,160 878,150 880,190 865,200",
            "910,240 940,232 950,262 920,268",
            "775,488 830,488 830,520 900,520 930,535 880,560 850,570 845,590 820,585 800,550 782,520",
            "515,445 560,430 600,430 570,470 525,465",
            "480,640 515,595 530,600 550,650 500,670",
            "365,650 400,640 425,665 400,680 370,672",
            "420,780 450,790 460,820 440,825 420,800",
            "180,590 215,580 240,640 250,700 300,760 300,800 330,830 335,870 370,900 375,945 340,940 290,905 250,890 240,780 230,690 200,640",
            "860,680 900,672 930,720 970,765 960,790 900,800 880,740",
            "100,560 130,570 140,590 115,590",
            "285,400 300,405 330,470 325,475",
            "1170,1050 1260,1035 1258,1110 1220,1130 1175,1135",
            "1090,1000 1130,985 1160,1000 1110,1012",
            "1390,900 1430,895 1430,960 1395,1030",
            "1340,1350 1380,1340 1390,1380 1350,1390",
            "780,630 795,615 803,638",
            "1010,610 1040,608 1045,635 1020,640",
            "1430,1060 1500,1080 1500,1170 1460,1120",
            "292,978 325,978 325,998 292,998",
          ]}
        />
        <Areas
          fill={LIME}
          list={[
            "940,1090 970,1070 990,1100 960,1130",
            "1150,1400 1190,1410 1190,1440 1150,1440",
            "985,1200 1010,1195 1015,1250 985,1250",
            "470,1240 485,1250 470,1288 458,1285",
            "620,600 655,580 660,700 650,850 630,850 635,740",
            "690,620 730,650 760,690 720,690",
          ]}
        />
        <Areas fill={SAGE} list={["565,1070 590,1065 590,1090 570,1095", "410,590 375,600 390,610"]} />
        <Areas fill={SAND} list={["1500,340 1480,360 1450,420 1500,390", "960,250 975,240 975,290"]} />
        <Areas
          fill={WATER}
          crisp
          list={[
            "1357,580 1385,565 1410,570 1415,620 1437,670 1425,682 1395,650 1370,630",
            "1245,890 1290,885 1290,920 1240,915",
            "1075,395 1095,400 1065,445 1055,440",
            "480,925 515,940 550,965 530,972 490,950",
            "950,540 970,540 985,565 965,560",
            "530,300 550,295 540,350 528,345",
            "650,1075 680,1115 670,1125 655,1100",
            "1155,548 1220,548 1220,555 1155,555",
            "1185,530 1215,528 1210,535 1185,536",
            "1230,30 1245,30 1245,45 1230,45",
            "1138,10 1170,10 1178,22 1150,22",
            "1090,85 1108,90 1100,102",
          ]}
        />
        <Lines stroke={WATER} width={2} list={["545,290 540,350 530,345", "640,350 625,400 605,370", "960,1080 905,1060"]} />
        <g strokeDasharray="3 7">
          <Lines straight stroke={WATER} width={3} list={["1238,40 1245,80 1250,140", "1258,150 1262,230"]} />
        </g>
        <Lines
          stroke={PEACH}
          width={1.8}
          list={[
            "130,30 150,50 155,90 180,120 185,170 160,200 155,240 140,262",
            "155,318 215,318 290,330 335,368 395,386 440,384 480,390 560,418 620,440",
            "152,470 200,500 235,550 240,610 240,650 262,685 310,690 340,780 375,860 400,880 450,900 480,925 480,965 560,995 570,967 625,960 640,930 685,908",
            "730,10 700,60 680,110 640,130",
            "920,10 920,50 960,115 1030,150 1070,135 1125,128 1138,200 1150,270 1140,320 1200,390 1210,430 1195,510 1120,508 1060,490 1000,460 900,405 860,455 770,468 690,455",
            "655,208 780,210 830,250 835,300 875,385 900,405",
            "1130,520 1180,575 1240,610 1270,670 1260,720",
            "690,590 740,680 780,710 815,760 820,860 840,890 900,885 960,895 1040,855 1090,860",
            "838,800 838,880",
            "1060,1050 1140,1035 1260,1020 1300,1010",
            "1340,940 1380,910 1400,880 1470,835 1420,790",
            "1395,1050 1420,1110 1430,1175 1470,1180 1500,1230",
            "500,1260 540,1310",
            "860,1290 800,1370",
            "700,1215 760,1218",
          ]}
        />
        <Lines
          stroke={PINK}
          width={2.2}
          list={[
            "142,262 155,290 155,320",
            "555,46 560,65 590,80 620,150 655,208 650,240 612,310 640,360 640,440 655,560 672,620 675,720 680,900 700,950 750,1015 745,1170 720,1195",
            "400,890 410,940 440,990 460,1050 490,1080 530,1140 560,1200 580,1260",
            "750,1015 800,1070 800,1110 860,1105 930,1090 1000,960 1020,915 1095,858 1215,850 1270,840 1275,790 1325,793",
            "750,1165 800,1110",
            "1090,1048 1140,1045 1220,1035",
            "870,1140 885,1200 905,1280 910,1370 870,1370 790,1385",
            "850,1370 910,1430 960,1480 990,1560",
            "700,1210 700,1290",
            "790,1515 830,1568",
            "1328,800 1350,820 1325,860 1340,910",
            "910,1370 960,1400",
          ]}
        />
        <Lines straight stroke={BORDER} width={2.4} list={["1275,8 1275,945 1390,1053"]} />
      </Layer>

      <Layer sheet={CENTRAL}>
        <Areas fill="#edf0d6" list={["1060,480 1150,520 1240,600 1220,700 1140,620 1060,560", "1240,690 1400,640 1450,700 1460,900 1390,960 1350,850 1250,800", "1260,1040 1440,1050 1430,1110 1300,1100", "1300,1140 1430,1170 1440,1210 1330,1180"]} />
        <Areas
          fill={LIME}
          list={[
            "905,565 940,550 985,590 1020,660 1080,750 1120,810 1110,860 1140,920 1130,950 1090,980 1050,960 990,900 950,830 900,780 860,730 850,690 880,700 860,640",
            "1430,985 1480,990 1545,985 1535,1050 1490,1075 1435,1070",
            "1170,960 1200,930 1240,940 1240,1000 1195,1010",
            "1060,340 1115,350 1115,370 1060,370",
            "650,150 710,150 700,190 660,190",
          ]}
        />
        <Areas
          fill={GREEN}
          list={[
            "940,680 1000,740 1050,780 1090,830 1090,855 1040,850 990,800 940,750 915,700",
            "590,475 640,470 670,500 740,520 760,550 700,560 640,530 600,510",
            "710,730 760,740 800,760 790,780 740,770 710,750",
            "870,830 900,840 940,880 920,890",
            "1040,920 1080,930 1110,975 1060,960",
            "1340,1270 1400,1255 1450,1280 1480,1330 1440,1355 1360,1365 1335,1345 1360,1320",
            "1480,730 1505,740 1500,810 1470,800",
            "1265,270 1300,265 1300,320 1265,320",
            "1090,20 1175,0 1170,45 1100,50",
            "1160,1280 1185,1285 1175,1300",
            "1110,570 1150,570 1150,600 1110,600",
          ]}
        />
        <Areas fill={SAGE} list={["800,660 850,655 900,690 930,720 880,715", "990,870 1050,890 1060,910 1000,900", "1270,960 1310,960 1315,1010 1270,1015", "1395,75 1450,120 1430,170 1400,140"]} />
        <Areas fill={WATER} list={["1420,200 1445,185 1468,205 1445,230 1422,222", "920,930 950,940 970,985 940,960"]} />
        <Lines
          stroke={PINK}
          width={2.2}
          list={[
            "740,480 775,520 795,570 775,640 780,680 850,750 900,825 920,830 970,920 1010,975 1012,1050 1030,1100 1015,1165 1035,1200 1080,1240",
            "850,300 905,380 915,480 940,540 1000,620 1040,700 1090,745 1140,830 1200,895 1280,1025 1380,1120 1440,1190 1465,1250 1480,1300 1550,1400",
            "1090,470 1150,530 1250,620 1310,720 1355,790 1370,900 1390,1030 1440,1100",
            "1400,1110 1500,1120 1560,1150",
            "740,310 850,295",
            "1140,1405 1300,1425",
          ]}
        />
        <Lines
          stroke={PEACH}
          width={1.8}
          list={[
            "610,520 650,570 700,575",
            "820,600 860,540 915,520 960,540 1060,535 1120,520",
            "1065,480 1065,520",
            "1245,650 1245,790 1225,830 1200,895 1165,965 1120,985",
            "1130,810 1220,808 1270,785 1440,785",
            "1410,790 1430,850 1430,1080",
            "1120,985 1200,1025 1380,1030",
            "1080,1240 1100,1290 1150,1330 1140,1400",
            "1230,1225 1290,1250 1340,1250 1345,1210 1450,1210",
            "1480,1305 1560,1305",
            "720,700 760,700",
          ]}
        />
      </Layer>

      <Layer sheet={SOUTH}>
        <Areas
          fill={GREEN}
          list={[
            "1130,440 1200,410 1280,435 1320,460 1315,490 1230,480 1150,475",
            "1235,590 1295,575 1315,690 1250,690 1230,650",
            "340,265 365,258 360,280",
            "755,190 800,185 800,210 760,210",
          ]}
        />
        <Areas fill={SAGE} list={["820,450 940,440 1080,470 1060,490 940,485 830,480", "640,510 780,495 790,520 700,530", "1040,640 1100,630 1150,700 1110,740 1060,720 1035,690", "1430,540 1460,540 1450,590", "1120,820 1170,830 1160,860"]} />
        <Areas fill={LIME} list={["1260,770 1285,765 1280,795"]} />
        <Areas fill={SAND} list={["955,220 985,215 985,245 955,245"]} />
        <Lines
          stroke={PINK}
          width={2.2}
          list={[
            "690,90 740,115 790,165 870,180 900,205 1010,210 1060,220 1120,235 1180,242",
            "880,180 877,310 885,370",
            "1180,250 1170,280 1140,310 1110,370 1085,400 1070,440 1090,480 1180,555 1250,575 1310,570 1400,630 1500,650",
            "560,450 640,480 760,490 950,490 1080,500",
            "1040,600 1100,640 1150,700 1170,800 1180,900",
            "1020,740 1070,790 1100,840 1120,900",
            "1100,560 1200,565",
            "1230,915 1330,930 1340,950 1430,990 1500,950",
            "1240,1015 1340,1020 1420,1035 1450,1010",
            "1155,1040 1190,1100 1215,1115",
            "850,480 860,560 950,640 1000,700",
          ]}
        />
        <Lines
          stroke={PEACH}
          width={1.8}
          list={[
            "260,240 290,290 330,325 320,380 420,400",
            "700,285 790,285",
            "950,0 930,60 910,120 885,180",
            "885,360 920,368 1085,375 1115,370",
            "1180,1020 1240,1050 1280,1020",
            "1190,1030 1185,1100",
          ]}
        />
        <Lines straight stroke="#9d96b3" width={2} list={["1068,1000 1160,1012"]} />
      </Layer>

      <Layer sheet={NEVADA}>
        <Areas
          fill={GREEN}
          list={[
            "738,55 758,62 748,110 745,170 742,208 725,208 724,160 714,115 728,85",
            "628,150 645,140 655,155 685,175 680,190 658,188 650,168",
            "680,235 694,248 684,280 672,262",
            "988,280 1012,282 1004,320 1000,390 994,340",
            "875,358 876,385 850,430 835,480 820,510 808,500 820,450 822,410 850,385",
            "388,565 390,595 372,625 345,660 322,700 310,745 300,740 310,690 335,650 365,610",
            "720,530 724,590 715,650 712,700 718,760 700,720 706,650 712,600",
            "806,545 822,545 822,610 848,630 830,700 815,755 796,755 805,700 795,640 790,590",
            "930,510 950,510 958,560 965,620 945,700 940,760 950,800 938,880 925,930 948,1000 930,1150 920,1200 910,1300 895,1300 920,1200 915,950 880,1020 850,1040 820,1020 820,940 806,890 822,805 870,800 900,805 865,820 862,880 900,900 945,880 915,840 925,720 940,650 925,560",
            "875,620 892,615 895,650 880,690 870,690",
            "870,700 878,780 860,800 862,740",
            "905,720 920,660 925,690 915,730",
            "975,620 1005,620 1000,700 1020,780 1040,900 1030,1000 1000,1060 990,1170 1000,1250 1040,1320 1000,1345 985,1300 980,1200 950,1290 935,1230 960,1150 970,1060 980,960 970,860 985,740",
            "1050,790 1080,790 1090,880 1070,920 1082,1000 1080,1060 1055,1060 1040,980 1045,900",
            "380,740 400,710 412,720 400,742",
            "355,800 370,790 372,810 360,815",
            "485,700 505,685 500,730 488,755 484,730",
            "528,706 546,706 546,720 528,720",
            "528,736 542,736 542,748 528,748",
            "562,715 576,700 572,715",
            "460,815 470,815 468,830",
            "575,790 590,805 580,815",
            "300,765 312,770 304,790",
            "390,815 415,820 435,780 440,820 420,870 405,910 390,915",
            "425,940 435,900 465,888 465,930 455,1000 470,980 480,900 500,850 530,810 556,790 530,850 515,930 500,1000 495,1095 460,1105 430,1085 425,1020",
            "560,940 582,865 592,920 580,990 575,1070 555,1075 538,1050 550,1010",
            "615,840 630,815 655,820 655,870 650,940 660,960 690,890 710,880 690,970 680,1100 665,1100 660,1020 640,990 630,1060 640,1110 600,1100 600,1040 625,970 635,920 618,890",
            "560,1150 575,1135 600,1150 600,1190 580,1190 558,1170",
            "636,1140 655,1130 662,1200 642,1203",
            "700,790 715,780 760,800 770,840 740,850 710,850 698,840",
            "740,920 770,925 770,990 740,965",
            "380,1035 385,960 400,960 390,1035",
            "512,1120 545,1110 520,1145",
            "655,660 690,645 690,665 660,675",
            "650,695 672,690 700,710 670,718",
            "585,620 600,595 598,630",
            "830,1090 865,1100 860,1150 840,1210 830,1260 795,1300 755,1310 770,1250 800,1220 820,1160",
            "652,1260 665,1320 676,1385 662,1385 650,1330 628,1300",
            "692,1275 705,1320 706,1338 698,1330",
            "420,1430 450,1440 440,1490 420,1500 395,1470 425,1460",
            "365,1380 400,1345 390,1380 370,1400",
            "350,1165 365,1150 370,1160 355,1182",
            "185,1020 200,1030 215,1090 240,1160 230,1190 300,1185 310,1200 260,1210 235,1250 290,1290 305,1340 330,1400 345,1470 330,1450 300,1390 270,1320 230,1300 200,1270 220,1210 190,1180 110,1150 80,1100 85,1060 120,1060 150,1080 160,1130 185,1130",
            "310,1470 350,1510 345,1560 310,1520",
            "150,1360 175,1330 220,1340 210,1370 170,1400",
            "1010,1435 1060,1385 1110,1365 1170,1395 1200,1400 1215,1360 1260,1390 1255,1500 1190,1515 1180,1480 1110,1500 1060,1480 1020,1490",
            "1380,1155 1420,1180 1445,1175 1410,1230 1380,1260 1375,1200",
            "1300,1390 1350,1340 1370,1280 1400,1310 1385,1360 1350,1400 1330,1440 1280,1430",
            "1315,1320 1325,1270 1345,1265 1330,1310",
            "1280,1440 1310,1440 1330,1480 1310,1510 1290,1480",
            "1330,1440 1385,1455 1370,1480 1340,1480",
            "805,1410 830,1370 858,1390 840,1430 835,1405",
            "970,1450 990,1400 1010,1380 985,1440 998,1480 972,1480",
            "1440,1470 1470,1385 1465,1430",
            "1505,1320 1520,1270 1560,1250 1560,1290",
            "1545,120 1568,110 1568,10 1530,10 1540,60",
            "830,10 852,10 850,40",
            "400,110 420,80 440,30 420,120 405,155",
            "15,830 50,830 60,860 30,860",
            "45,900 78,890 78,1020 45,1020",
            "10,1350 45,1340 45,1380 20,1395",
          ]}
        />
        <Areas
          fill={OLIVE}
          list={[
            "955,505 975,540 990,600 985,650 972,720 970,800 960,880 945,890 935,840 938,770 945,700 960,640 965,580",
            "995,560 1015,565 1015,620 1028,640 1025,700 1050,740 1068,745 1060,790 1048,830 1050,900 1045,960 1040,1050 1060,1120 1065,1150 1045,1110 1030,1150 1035,1240 1060,1280 1055,1320 1030,1310 990,1240 985,1160 990,1040 1000,960 1010,880 1005,780 1000,680 990,620",
            "950,900 975,910 985,980 965,1000 955,1040 945,980",
            "900,940 920,960 915,1040 920,1160 925,1260 870,1240 850,1230 860,1150 870,1060",
            "935,1240 990,1290 985,1360 970,1450 950,1525 930,1510 920,1420 940,1360",
            "965,1150 985,1140 970,1220 940,1270 945,1200",
            "150,720 185,700 180,720 155,735",
          ]}
        />
        <Areas fill={SAGE} list={["735,860 760,850 755,900 735,950 725,1030 710,1035 715,970 705,920", "110,1170 150,1170 160,1250 130,1240", "235,1165 255,1180 245,1215 232,1200"]} />
        <Areas fill={LIME} list={["838,510 850,510 830,600 820,600", "225,780 245,785 235,800"]} />
        <Areas fill={SAND} list={["140,285 160,310 155,350 125,380 90,425 100,385", "1400,780 1415,725 1430,720 1420,760", "1365,850 1390,840 1385,880", "520,1320 535,1320 530,1340"]} />
        <Areas
          fill={WATER}
          crisp
          list={[
            "1318,90 1340,68 1345,100 1372,140 1400,215 1425,180 1430,220 1465,260 1500,310 1470,340 1450,390 1430,405 1405,380 1400,345 1380,350 1335,300 1335,220 1308,190 1305,130",
            "1412,135 1445,120 1480,145 1475,165 1440,165 1425,210 1412,175",
            "1510,515 1530,515 1550,560 1530,580 1515,560",
            "27,585 45,565 65,580 70,640 82,680 70,685 45,650 30,620",
            "210,1035 222,1060 222,1085 212,1085",
            "225,630 236,635 232,660 225,655",
            "140,1285 160,1265 175,1285 155,1305",
            "1264,939 1303,939 1301,947 1263,947",
            "1260,962 1292,962 1290,970 1259,970",
            "1263,984 1289,984 1287,992 1265,992",
            "1257,1006 1279,1006 1277,1014 1257,1014",
            "1261,1029 1277,1029 1276,1037 1261,1037",
            "1257,1050 1271,1050 1271,1054 1257,1054",
            "780,688 788,688 788,696 780,696",
            "778,710 787,710 787,718 778,718",
            "780,732 788,732 788,740 780,740",
            "780,754 788,754 788,762 780,762",
            "780,777 792,777 792,785 780,785",
            "1131,418 1151,418 1149,423 1133,423",
            "290,405 305,400 298,430 288,440",
          ]}
        />
        <Lines stroke={WATER} width={2} list={["1485,835 1505,860 1512,885", "295,440 295,480", "142,505 150,500"]} />
        <Lines
          stroke={PEACH}
          width={1.8}
          list={[
            "403,10 392,70 392,160 412,200 412,250 402,300",
            "973,10 955,70 968,150 955,200 935,260 927,300 915,380 925,440 955,500 990,580 995,610 975,660 970,730 965,840 945,890 925,895 900,960 918,1000 915,1100 925,1200 925,1310 885,1385 880,1440 900,1530 920,1568",
            "205,655 203,850 208,900 195,980 205,1070 235,1120 265,1110 310,1120 330,1190 350,1230 372,1280 405,1280 435,1245 460,1243 500,1270 488,1300 500,1410 515,1490 570,1568",
            "115,770 160,795 203,805",
            "70,785 110,830 50,870 15,910",
            "115,840 125,960 175,950 195,980",
            "60,1080 72,1175 95,1175 120,1210 130,1300 155,1370 180,1405 235,1440 240,1475 270,1490 280,1530 300,1568",
            "1370,1275 1410,1300 1420,1370 1400,1440 1370,1530 1365,1568",
            "1470,890 1480,940 1500,980 1505,1000",
            "1437,415 1437,450",
            "1485,400 1490,470",
            "1460,60 1440,30 1470,35 1525,50 1500,130",
          ]}
        />
        <Lines
          stroke={PINK}
          width={2.4}
          list={[
            "5,795 70,775 120,762 160,700 215,650 225,612 260,575 292,510 300,430 340,405 360,345 400,305 428,290 450,320 485,328 520,370 555,425 575,430 590,410 628,398 665,420 705,392 738,392 780,345 800,315 835,312 870,270 960,262 1010,275 1040,320 1065,345 1095,385 1275,392 1320,360 1345,380 1430,412 1460,375 1500,378",
            "1405,10 1430,25 1455,55 1480,90 1485,140 1482,200 1490,240 1505,290 1510,380 1510,490 1545,550",
            "1458,10 1455,55",
            "1545,580 1540,640 1525,730 1480,830 1470,880 1440,930 1430,980 1380,1050 1378,1130 1365,1170 1373,1250 1335,1335 1290,1380 1265,1430 1250,1510 1240,1568",
            "1378,1095 1420,1110 1450,1090 1480,1020 1520,985 1568,998",
            "1495,250 1540,260 1568,290",
            "1495,400 1497,460 1510,470",
            "1505,420 1530,420 1530,390 1560,385",
          ]}
        />
        <Lines straight stroke={BORDER} width={2.4} list={["1102,8 1102,1568", "48,1053 468,1568"]} />
      </Layer>

      <Layer sheet={DESERT}>
        <Areas
          fill={GREEN}
          list={[
            "900,200 908,260 905,320 890,370 862,355 885,290",
            "740,370 790,380 820,410 830,450 800,475 765,430",
            "515,410 535,405 535,480 520,510 512,480",
            "385,435 410,435 405,460 390,450",
            "310,80 345,100 350,140 345,200 355,250 370,310 400,350 360,320 335,250 320,180",
            "1250,375 1280,355 1312,370 1300,410 1275,460 1300,490 1280,580 1260,610 1255,530 1265,470 1245,420",
            "1410,370 1440,260 1465,200 1480,220 1478,300 1500,360 1500,440 1470,460 1430,430",
            "1420,470 1460,490 1500,490 1550,520 1530,560 1470,540 1450,510",
            "1160,380 1200,370 1210,420 1190,470 1165,440",
            "1190,240 1240,250 1250,270 1210,300 1195,290",
            "1070,630 1085,640 1095,690 1085,705",
            "1128,745 1143,745 1148,855 1135,858 1127,800",
            "1460,640 1560,625 1560,700 1465,690",
            "880,600 895,610 890,640",
            "820,710 870,700 840,745 812,745",
            "1300,140 1330,120 1330,200 1290,190",
            "755,145 770,150 765,165",
            "505,215 530,240 515,240",
          ]}
        />
        <Areas fill={SAGE} list={["1100,540 1140,525 1160,570 1220,625 1180,670 1150,630 1135,580 1105,560"]} />
        <Areas
          fill={SAND}
          list={[
            "610,335 700,335 850,345 870,430 840,440 790,370 740,345 720,400 670,460 640,420",
            "790,250 805,215 805,270 830,310 790,330",
            "1050,200 1105,170 1128,210 1100,260 1040,240",
            "900,560 950,560 950,700 970,800 940,790 930,680 880,700 830,710 870,620",
            "860,1300 920,1350 945,1410 880,1405",
            "945,1480 1020,1490 1080,1550 940,1550",
            "855,1000 875,980 870,1040",
            "770,800 800,790 785,825",
            "370,800 395,795 390,825",
            "830,470 850,450 890,520 850,520",
          ]}
        />
        <Areas fill={OLIVE} list={["1400,1130 1430,1120 1460,1150 1410,1160", "1380,1240 1435,1240 1435,1280 1380,1270", "1520,1100 1560,1095 1560,1120 1520,1120", "1365,1170 1380,1160 1382,1210 1365,1210", "1490,1270 1520,1310 1500,1310"]} />
        <Areas fill={WATER} crisp list={["715,1180 745,1210 795,1250 800,1290 785,1312 750,1280 728,1230", "1035,355 1050,360 1042,400 1035,460 1024,460 1030,400", "945,468 985,462 1010,460 985,475 960,490", "1060,470 1105,455 1120,490 1080,480", "785,1525 815,1525 815,1533 785,1533", "1432,1090 1445,1080 1440,1105", "980,650 995,660 990,680"]} />
        <Lines
          stroke={PEACH}
          width={1.8}
          list={[
            "165,0 180,25 240,70 270,110 305,180 310,250 345,335 355,450 375,540 375,590 410,640 415,700 450,830 465,925",
            "495,0 510,80 540,150 590,210 590,265 630,310 690,335 805,340 870,425",
            "710,340 730,440 770,500 870,495",
            "905,0 880,45 885,90 920,160 930,280 940,400",
            "990,530 1030,610 1070,700 1100,725",
            "925,495 935,540 930,600 945,690 950,740 1060,722 1090,725",
            "950,740 955,810 990,830",
            "990,830 990,990 1000,1010 1060,1030 1070,1100 1068,1250 1045,1380 1025,1430",
            "1170,740 1185,850 1220,925 1300,1000 1340,1080 1405,1140",
            "1405,730 1410,885 1440,900 1445,940 1468,970",
            "1050,860 1040,930",
            "375,588 355,680 330,750",
            "1420,0 1370,130 1390,190 1385,230 1350,258 1315,240 1300,210 1230,185",
            "1395,210 1450,200 1490,165 1560,190",
            "970,1250 980,1290 930,1330 865,1350 805,1340",
            "815,1345 815,1410",
            "825,1345 828,1410",
            "1365,1350 1370,1240 1360,1160",
            "1480,850 1510,870 1535,830 1535,870",
          ]}
        />
        <Lines
          stroke={PINK}
          width={2.4}
          list={[
            "1295,0 1260,60 1240,150 1190,205 1110,265 1040,285 1000,335 950,380 935,410 890,425 885,530 850,600 835,655 800,655 720,710 685,755 590,805 530,812",
            "875,415 905,420 915,440 905,470 885,480 865,450 862,425 875,415",
            "530,815 640,838 680,862 785,863 850,840 980,815 1010,862 1080,860 1090,740 1105,725 1180,738 1260,725 1320,692 1390,722 1450,720 1500,705 1560,710",
            "620,1085 700,1155 780,1162 850,1142 925,1172 1010,1172 1090,1152 1210,1175 1375,1220 1480,1215 1568,1215",
            "1468,970 1500,920 1560,855",
            "1468,970 1468,1060 1462,1180 1478,1218",
            "1430,1160 1450,1125 1465,1125",
            "1375,1220 1370,1355",
            "990,1410 1040,1435 1120,1425 1200,1390 1345,1357 1420,1380 1490,1388 1550,1390",
            "1495,1270 1560,1398",
            "1445,1215 1455,1260 1520,1262 1568,1262",
            "1505,1210 1510,1290",
            "1520,1235 1568,1235",
            "560,1385 640,1400 710,1440 750,1410 860,1402 985,1410",
            "580,1455 700,1482 740,1455 830,1440",
            "1480,1215 1450,1240",
            "520,1470 540,1530 560,1550",
            "1550,750 1550,800",
          ]}
        />
        <Lines straight stroke={BORDER} width={2.4} list={["310,0 990,775", "1102,0 1102,450", "1102,215 1568,215"]} />
        <Lines stroke="#a9abc4" width={2.6} list={["1102,450 1085,492 1065,490 1050,465 1010,458 970,468 965,510 980,560 985,650 1000,740 990,780 990,830 1020,870 1040,935 1085,980 1050,1035 1015,1080 1010,1150 1010,1190 975,1240 980,1320 1020,1340 1020,1395 985,1415"]} />
        <Lines straight stroke="#b5a5bb" width={4.5} list={["570,1460 750,1442 975,1415"]} />
        <Lines stroke="#b5a5bb" width={2.6} list={["975,1415 960,1450 960,1480", "960,1480 915,1490 920,1550", "980,1490 1100,1550"]} />
      </Layer>

      {SMALL_TOWNS.map(([x, y, r], i) => (
        <circle key={i} cx={x} cy={y} r={r} fill="#fff" stroke="#8d8d88" strokeWidth={1.8} />
      ))}

      {LABELS.map(([text, x, y, size, width, region]) => (
        <text
          key={text}
          x={x}
          y={y}
          fontSize={size}
          fontFamily='"Noto Sans", sans-serif'
          fontStyle={region ? "italic" : "normal"}
          fontWeight={500}
          fill={region ? "#8f7199" : "#4d4d4b"}
          stroke="#f6f4f0"
          strokeOpacity={0.8}
          strokeWidth={4}
          strokeLinejoin="round"
          paintOrder="stroke"
          {...(width ? { textLength: width, lengthAdjust: "spacingAndGlyphs" as const } : {})}
        >
          {text}
        </text>
      ))}

      {ROUTES.map(([sheet, points, count, spread, max], i) => (
        <Route key={i} sheet={sheet} points={points} count={count} spread={spread} max={max} seed={i * 17 + 5} />
      ))}
      <Bubbles sheet={NORTH} data={NORTH_BUBBLES} />
      <Bubbles sheet={CENTRAL} data={CENTRAL_BUBBLES} />
      <Bubbles sheet={SOUTH} data={SOUTH_BUBBLES} />
      <Bubbles sheet={DESERT} data={DESERT_BUBBLES} />

      <circle cx={2142} cy={1569} r={24} fill="#fff" opacity={0.6} />
      <circle cx={2142} cy={1569} r={14.5} fill="#333" />
      <circle cx={2142} cy={1561.5} r={2.7} fill="#f5f5f3" />
      <path d="M2138.5 1567h6v10h-5v-7h-1z" fill="#f5f5f3" stroke="#f5f5f3" strokeWidth={1} strokeLinejoin="round" />
    </svg>
  );
}

function Field({ label, value, clearable }: { label: string; value: string; clearable?: boolean }) {
  return (
    <div className="h-[168px]">
      <div className="h-[50px] text-[32px] leading-[49px] tracking-[2.75px]">{label}</div>
      <div className="flex h-[72px] items-center rounded-lg border-2 border-[#ccc] bg-white pl-5 pr-5 text-[#333]">
        <span className="flex-1 pb-[2px] text-[32px] leading-[64px] tracking-[2.65px]">{value}</span>
        {clearable && (
          <svg className="mr-[19px] h-[18px] w-[18px]" viewBox="0 0 18 18" stroke="#999" strokeWidth={2.8}>
            <path d="M1 1l16 16M17 1L1 17" />
          </svg>
        )}
        <svg className="h-[10px] w-5" viewBox="0 0 20 10" fill="#999">
          <path d="M0 0h20L10 10z" />
        </svg>
      </div>
    </div>
  );
}

function Slider({ label, marks, note }: { label: string; marks: string[]; note: string }) {
  return (
    <div className="h-[204px]">
      <div className="h-12 text-[32px] leading-[49px] tracking-[2.65px]">{label}</div>
      <div className="relative mx-[50px] h-8">
        <div className="absolute inset-x-0 top-3 h-2 bg-[#b3dff6]" />
        <div className="relative flex h-8 items-center justify-between">
          {marks.map((m, i) => (
            <div key={m} className="flex w-0 justify-center">
              {i === 0 || i === marks.length - 1 ? (
                <div className="h-7 w-7 shrink-0 rounded-full border-4 border-[#a4daf8] bg-white" />
              ) : (
                <div className="h-4 w-4 shrink-0 rounded-full border-4 border-[#a4daf8] bg-white" />
              )}
            </div>
          ))}
        </div>
      </div>
      <div className="mx-[50px] mt-[11px] flex h-6 justify-between text-[24px] leading-6 tracking-[2.4px] text-[#666]">
        {marks.map((m) => (
          <div key={m} className="flex w-0 justify-center">
            <span>{m}</span>
          </div>
        ))}
      </div>
      <div className="mt-[10px] text-[21px] leading-[33px] tracking-[1.84px]">{note}</div>
    </div>
  );
}

const RATES = ["9-Excellent", "8-Very Good", "7-Good", "6-Satisfactory", "5-Fair", "4-Poor", "3-Serious", "2-Critical", '1-"Imminent" Failure', "0-Failed"];

export default function App() {
  return (
    <div className="h-[1850px] w-[2662px] overflow-hidden bg-white px-8 font-['Lato',sans-serif] text-[#55595c]">
      <h1 className="h-[60px] whitespace-nowrap text-[64px] font-semibold leading-[62px] tracking-[6.87px] text-[#1a1a1a]">US HIGHWAY BRIDGE MAP</h1>
      <p className="mt-[27px] h-12 whitespace-nowrap text-[32px] leading-[50px] tracking-[2.42px]">
        Dashboard to Visualize US Interstate, Numbered, and State highway bridges from the National Bridge Inventory Database
      </p>
      <div className="mt-[34px] grid h-[132px] w-[2592px] grid-cols-[1297px_1295px] text-center text-[32px] tracking-[2.5px]">
        <div className="border-2 border-[#d6d6d6] bg-[#f9f9f9] leading-[127px]">Heatmap</div>
        <div className="border-r-2 border-t-4 border-r-[#d6d6d6] border-t-[#2f77ec] bg-white leading-[127px] text-black">Scatterplot</div>
      </div>
      <div className="mt-[46px] flex gap-12 whitespace-nowrap">
        <aside className="w-[612px] shrink-0">
          <p className="h-12 text-[32px] leading-[49px] tracking-[2.47px]">Number of Bridges Selected: 5328</p>
          <p className="mb-12 h-12 text-[32px] leading-[49px] tracking-[2.24px]">Mean evaluation rating: 6.19</p>
          <Field label="State" value="California" />
          <Field label="Highway" value="State highway" />
          <Field label="Highway Number" value="All" clearable />
          <Field label="Bridge Type" value="All" />
          <Slider label="Bridge length (m)" marks={["0", "10", "100", "1000", "10000", "100000"]} note="Selected length range: [0.00, 100000.00]" />
          <Slider label="Number of Spans" marks={["0", "10", "100", "1000"]} note="Selected span range: [0.00, 1000.00]" />
          <Slider label="Evaluation Rating" marks={["-1", "0", "1", "2", "3", "4", "5", "6", "7", "8", "9"]} note="* -1 for bridges without rating" />
        </aside>
        <main className="flex-1">
          <h3 className="text-[40px] font-semibold leading-[48px] tracking-[6.8px] text-[#1a1a1a]">HIGHWAY BRIDGES SCATTERPLOT (BUBBLE SIZE BY LENGTH)</h3>
          <div className="mt-[118px] flex">
            <BridgeMap />
            <div className="ml-[50px] pt-[21px] font-['DejaVu_Sans',sans-serif] text-[#2a3f5f]">
              <div className="h-8 text-[28px] leading-[33px] tracking-[1.9px]">Bridge Evaluation Rate</div>
              <div className="mt-[11px] flex">
                <div className="h-[1016px] w-[60px] bg-[linear-gradient(to_bottom,#15345f,#3265a5,#5090bf,#99c4da,#d6e4ee,#f7f7f7,#f7dcc9,#e7a582,#c9634f,#a3252e,#5f0f20)]" />
                <div className="flex h-[1016px] flex-col justify-between text-[24px] tracking-[2.25px]">
                  {RATES.map((r) => (
                    <div key={r} className="flex h-0 items-center">
                      <div className="-ml-px mr-1 h-[2px] w-[10px] bg-[#444]" />
                      <span>{r}</span>
                    </div>
                  ))}
                </div>
              </div>
            </div>
          </div>
          <p className="mt-[137px] text-[24px] leading-[44px] tracking-[2.27px]">Data accessed January 13, 2023. Latest version can be found below:</p>
          <a className="text-[24px] leading-[44px] tracking-[2.5px] text-[#1a1a1a] underline decoration-2 underline-offset-2" href="#">USDOT BTS</a>
        </main>
      </div>
    </div>
  );
}
